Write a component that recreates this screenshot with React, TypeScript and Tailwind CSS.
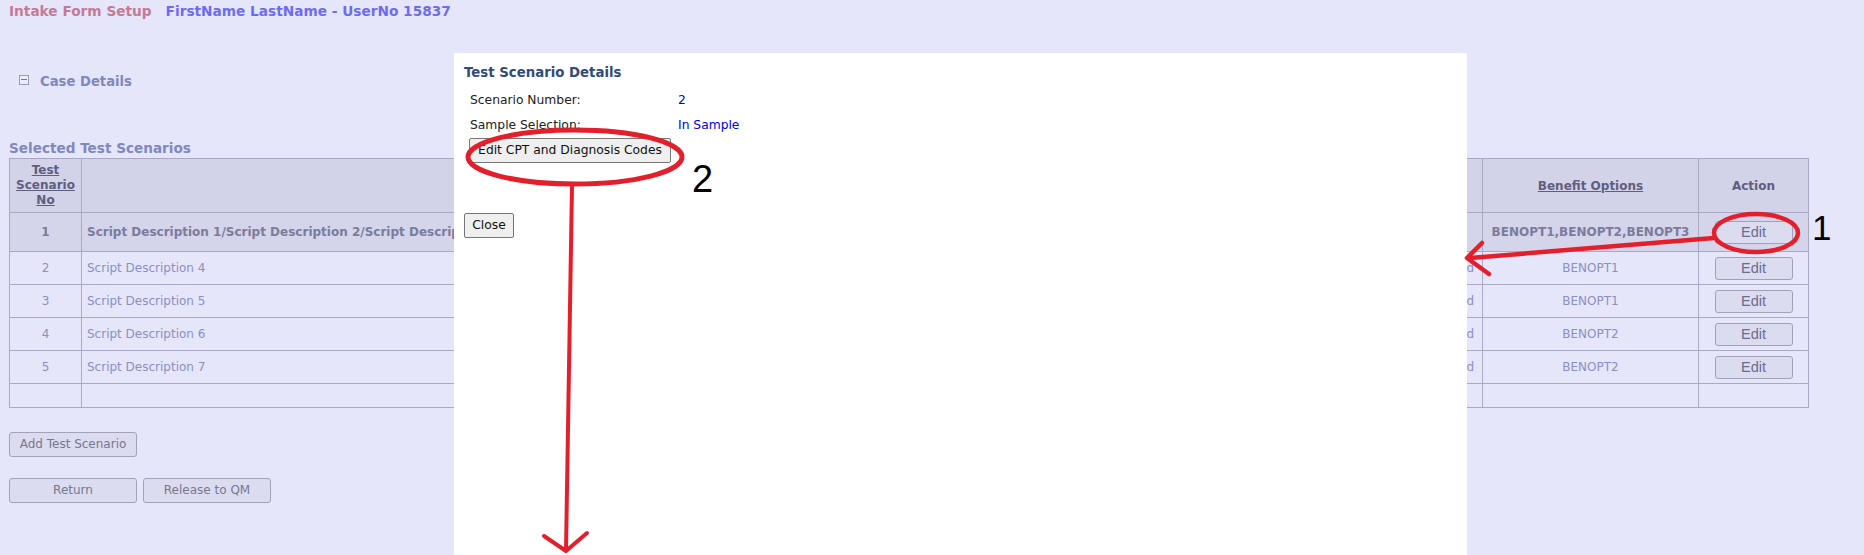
import React from "react";

type Scenario = {
  no: number;
  description: string;
  status: string;
  benefits: string;
  selected?: boolean;
};

const scenarios: Scenario[] = [
  {
    no: 1,
    description: "Script Description 1/Script Description 2/Script Description 3",
    status: "",
    benefits: "BENOPT1,BENOPT2,BENOPT3",
    selected: true,
  },
  { no: 2, description: "Script Description 4", status: "Not Started", benefits: "BENOPT1" },
  { no: 3, description: "Script Description 5", status: "Not Started", benefits: "BENOPT1" },
  { no: 4, description: "Script Description 6", status: "Not Started", benefits: "BENOPT2" },
  { no: 5, description: "Script Description 7", status: "Not Started", benefits: "BENOPT2" },
];

const pageButton =
  "h-[25px] w-[128px] rounded-[3px] border border-[#a2a2ba] bg-[#dcdcf1] text-[12px] text-[#77778f]";

// Intake form page with the scenario details popup open and the red
// annotation marks drawn on top.
export default function App() {
  return (
    <div
      className="relative h-[555px] overflow-hidden bg-[#e6e6fa]"
      style={{ fontFamily: '"DejaVu Sans", Verdana, sans-serif' }}
    >
      <div className="flex h-[21px] items-center gap-[14px] pl-[9px] pt-[1px] text-[13.7px] font-bold leading-[20px]">
        <span className="text-[#c47a96]">Intake Form Setup</span>
        <span className="text-[#6c6cf0]">FirstName LastName - UserNo 15837</span>
      </div>

      {/* ── Case details (collapsed) ── */}
      <div className="mt-[51px] flex h-[20px] items-center pl-[19px]">
        <span className="relative -mt-[5px] flex h-[10px] w-[10px] items-center justify-center border border-[#9a9ab4] bg-[#ececfa]">
          <span className="h-px w-[6px] bg-[#7a7a94]" />
        </span>
        <span className="ml-[11px] text-[13.2px] font-bold text-[#7f88bf]">Case Details</span>
      </div>

      {/* ── Selected test scenarios ── */}
      <div className="mt-[47px] h-[18px] pl-[9px] text-[13.6px] font-bold leading-[18px] text-[#7f88bf]">
        Selected Test Scenarios
      </div>

      <table className="ml-[9px] mt-px w-[1799px] table-fixed border-collapse text-[12px]">
        <colgroup>
          <col className="w-[72px]" />
          <col className="w-[1316px]" />
          <col className="w-[85px]" />
          <col className="w-[216px]" />
          <col className="w-[110px]" />
        </colgroup>
        <thead>
          <tr className="h-[54px] bg-[#d2d2e8] font-bold text-[#5e5e80]">
            <th className="border border-[#a9a9c6] px-1 leading-[15px] underline">
              Test Scenario No
            </th>
            <th className="border border-[#a9a9c6] underline">Script Description</th>
            <th className="border border-[#a9a9c6] underline">Status</th>
            <th className="border border-[#a9a9c6] underline">Benefit Options</th>
            <th className="border border-[#a9a9c6]">Action</th>
          </tr>
        </thead>
        <tbody>
          {scenarios.map((s) => (
            <tr
              key={s.no}
              className={
                s.selected
                  ? "h-[39px] bg-[#d4d4ea] font-bold text-[#7b7b9c]"
                  : "h-[33px] bg-[#e6e6fa] text-[#8b8fc3]"
              }
            >
              <td className="border border-[#a9a9c6] text-center">{s.no}</td>
              <td className="truncate border border-[#a9a9c6] pl-[5px]">{s.description}</td>
              <td className="border border-[#a9a9c6] pr-[8px] text-right">{s.status}</td>
              <td className="border border-[#a9a9c6] text-center">{s.benefits}</td>
              <td className="border border-[#a9a9c6] text-center">
                <button
                  className="h-[23px] w-[78px] rounded-[3px] border border-[#a0a0b8] bg-[#dcdcf1] text-[14.5px] font-normal text-[#6c6c8c]"
                  style={{ fontFamily: '"Liberation Sans", Arial, sans-serif' }}
                >
                  Edit
                </button>
              </td>
            </tr>
          ))}
          <tr className="h-[24px]">
            <td className="border border-[#a9a9c6]" />
            <td className="border border-[#a9a9c6]" />
            <td className="border border-[#a9a9c6]" />
            <td className="border border-[#a9a9c6]" />
            <td className="border border-[#a9a9c6]" />
          </tr>
        </tbody>
      </table>

      <div className="mt-[23px] pl-[9px]">
        <button className={pageButton}>Add Test Scenario</button>
      </div>
      <div className="mt-[21px] flex gap-[6px] pl-[9px]">
        <button className={pageButton}>Return</button>
        <button className={pageButton}>Release to QM</button>
      </div>

      {/* ── Test scenario details popup ── */}
      <div className="absolute left-[454px] top-[53px] h-[502px] w-[1013px] bg-white pl-[10px] pt-[12px] text-[12.3px] text-[#222]">
        <div className="h-[16px] text-[13.3px] font-bold leading-[16px] text-[#2f4c7c]">
          Test Scenario Details
        </div>
        <div className="ml-[6px] mt-[7px] flex h-[25px] items-center">
          <span className="w-[208px]">Scenario Number:</span>
          <span className="text-[#0000ee]">2</span>
        </div>
        <div className="ml-[6px] flex h-[25px] items-center">
          <span className="w-[208px]">Sample Selection:</span>
          <span className="text-[#0000ee]">In Sample</span>
        </div>
        <button className="ml-[5px] h-[25px] w-[202px] rounded-[2px] border border-[#767676] bg-[#efefef] text-[12.3px] text-[#111]">
          Edit CPT and Diagnosis Codes
        </button>
        <div className="mt-[50px]">
          <button className="h-[25px] w-[50px] rounded-[2px] border border-[#767676] bg-[#efefef] text-[12.3px] text-[#111]">
            Close
          </button>
        </div>
      </div>

      {/* ── Red annotation marks ── */}
      <svg
        className="pointer-events-none absolute left-0 top-0"
        width="1864"
        height="555"
        viewBox="0 0 1864 555"
        fill="none"
        stroke="#e41f2b"
        strokeLinecap="round"
        strokeLinejoin="round"
      >
        <ellipse cx="575" cy="157" rx="107" ry="27" strokeWidth="5" />
        <path d="M572 186 L566 550" strokeWidth="4" />
        <path d="M544 536 L566 551 L587 533" strokeWidth="4" />
        <ellipse cx="1756" cy="233" rx="42" ry="19" strokeWidth="4.5" />
        <path d="M1714 238 L1470 258" strokeWidth="4.5" />
        <path d="M1482 243 L1467 258 L1489 274" strokeWidth="4.5" />
      </svg>
      <div
        className="absolute left-[692px] top-[151px] text-[38px] leading-[56px] text-black"
        style={{ fontFamily: '"Liberation Sans", Arial, sans-serif' }}
      >
        2
      </div>
      <div
        className="absolute left-[1812px] top-[203px] text-[35px] leading-[50px] text-black"
        style={{ fontFamily: '"Liberation Sans", Arial, sans-serif' }}
      >
        1
      </div>
    </div>
  );
}
